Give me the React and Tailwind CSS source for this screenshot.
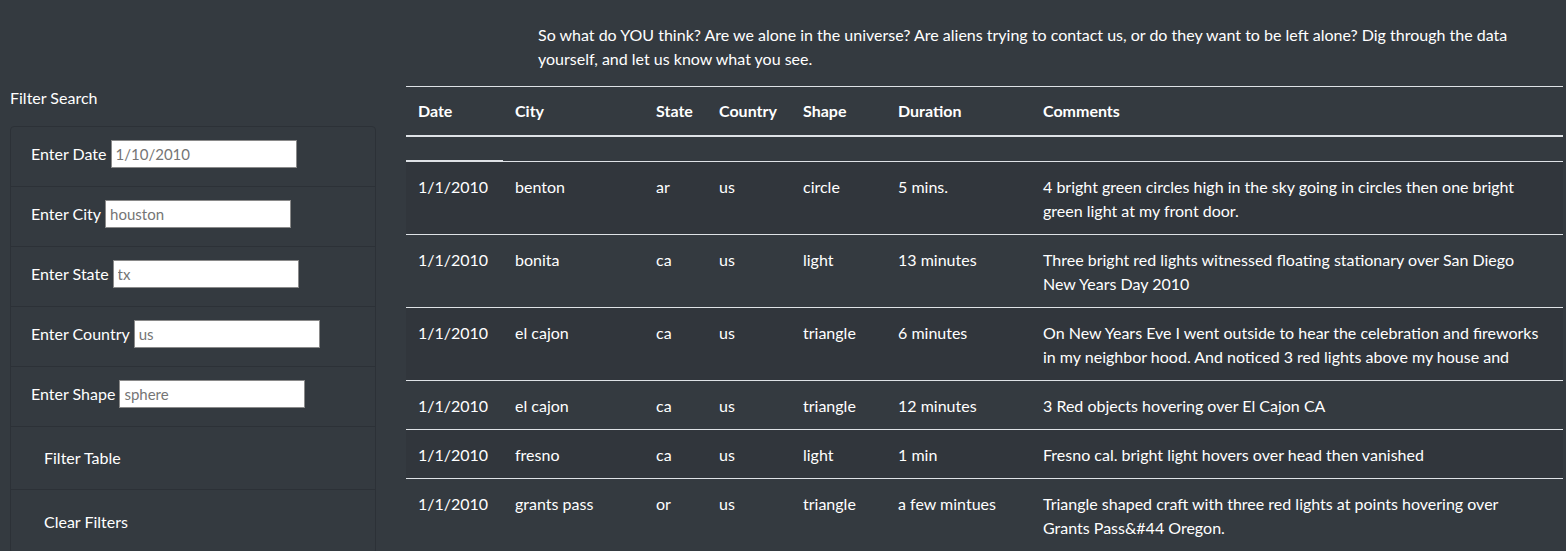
import React from "react";

const rows = [
  { date: "1/1/2010", city: "benton", state: "ar", country: "us", shape: "circle", dur: "5 mins.", c: ["4 bright green circles high in the sky going in circles then one bright", "green light at my front door."], s: true },
  { date: "1/1/2010", city: "bonita", state: "ca", country: "us", shape: "light", dur: "13 minutes", c: ["Three bright red lights witnessed floating stationary over San Diego", "New Years Day 2010"], s: false },
  { date: "1/1/2010", city: "el cajon", state: "ca", country: "us", shape: "triangle", dur: "6 minutes", c: ["On New Years Eve I went outside to hear the celebration and fireworks", "in my neighbor hood. And noticed 3 red lights above my house and"], s: true },
  { date: "1/1/2010", city: "el cajon", state: "ca", country: "us", shape: "triangle", dur: "12 minutes", c: ["3 Red objects hovering over El Cajon CA"], s: false },
  { date: "1/1/2010", city: "fresno", state: "ca", country: "us", shape: "light", dur: "1 min", c: ["Fresno cal. bright light hovers over head then vanished"], s: true },
  { date: "1/1/2010", city: "grants pass", state: "or", country: "us", shape: "triangle", dur: "a few mintues", c: ["Triangle shaped craft with three red lights at points hovering over", "Grants Pass&#44 Oregon."], s: false },
];

const cols = "grid grid-cols-[97px_141px_63px_84px_95px_145px_532px]";

function Field({ label, ph }) {
  return (
    <div className="h-[60px] flex items-center pl-[20px] pb-[6px] border-b border-[#2c3137]">
      <span className="whitespace-nowrap">{label}</span>
      <input
        placeholder={ph}
        className="ml-[4px] w-[186px] h-[28px] bg-white border border-[#8a8a8a] px-[4px] text-[15px] text-black placeholder:text-[#757575] outline-none"
      />
    </div>
  );
}

export default function App() {
  return (
    <div className="min-h-screen bg-[#343a40] text-white font-['Segoe_UI','Lato',sans-serif] text-[16px] leading-[24px] flex overflow-hidden">
      <div className="w-[376px] shrink-0 pl-[10px] pt-[86px]">
        <div className="h-[24px]">Filter Search</div>
        <div className="mt-[16px] w-[366px] border border-[#2c3137] rounded-[4px]">
          <Field label="Enter Date" ph="1/10/2010" />
          <Field label="Enter City" ph="houston" />
          <Field label="Enter State" ph="tx" />
          <Field label="Enter Country" ph="us" />
          <Field label="Enter Shape" ph="sphere" />
          <div className="h-[63px] flex items-center pl-[33px] border-b border-[#2c3137]">Filter Table</div>
          <div className="h-[63px] flex items-center pl-[33px]">Clear Filters</div>
        </div>
      </div>
      <div className="flex-1 min-w-0">
        <p className="mt-[23px] pl-[162px] whitespace-nowrap">
          So what do YOU think? Are we alone in the universe? Are aliens trying to contact us, or do they want to be left alone? Dig through the data
          <br />
          yourself, and let us know what you see.
        </p>
        <div className="mt-[15px] ml-[30px] w-[1157px]">
          <div className={`${cols} border-t border-[#dee2e6] border-b-2 font-bold`}>
            {["Date", "City", "State", "Country", "Shape", "Duration", "Comments"].map((h) => (
              <div key={h} className="px-[12px] py-[12px]">{h}</div>
            ))}
          </div>
          <div className={`${cols} h-[24px]`}>
            <div className="border-b-2 border-[#dee2e6] -mb-[1px]" />
          </div>
          {rows.map((r, i) => (
            <div key={i} className={`${cols} border-t border-[#dee2e6] ${r.s ? "bg-[#31363c]" : ""}`}>
              <div className="pt-[13px] pb-[11px] px-[12px]">{r.date}</div>
              <div className="pt-[13px] pb-[11px] px-[12px]">{r.city}</div>
              <div className="pt-[13px] pb-[11px] px-[12px]">{r.state}</div>
              <div className="pt-[13px] pb-[11px] px-[12px]">{r.country}</div>
              <div className="pt-[13px] pb-[11px] px-[12px]">{r.shape}</div>
              <div className="pt-[13px] pb-[11px] px-[12px]">{r.dur}</div>
              <div className="pt-[13px] pb-[11px] px-[12px] whitespace-nowrap">
                {r.c.map((l, j) => (
                  <div key={j}>{l}</div>
                ))}
              </div>
            </div>
          ))}
        </div>
      </div>
    </div>
  );
}
